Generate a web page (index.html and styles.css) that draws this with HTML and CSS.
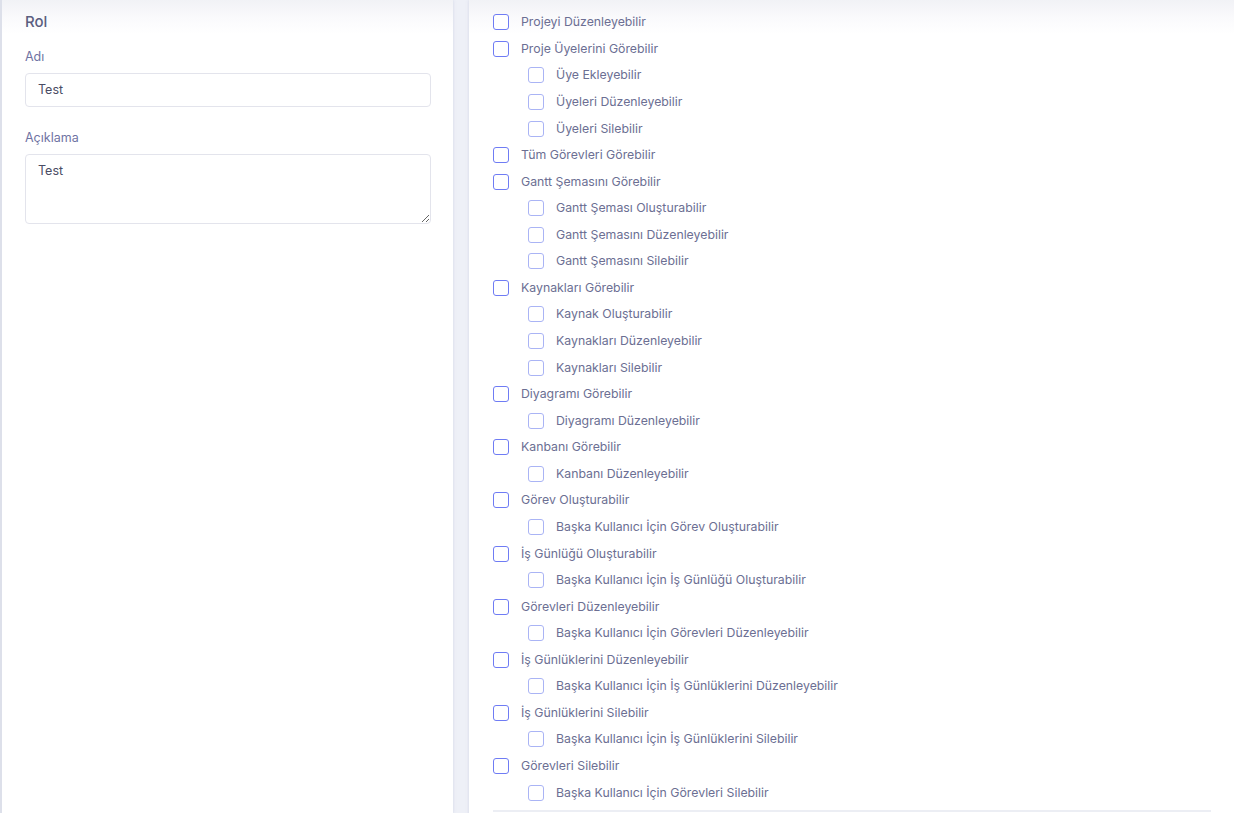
FILE: index.html
```html
<!DOCTYPE html>
<html lang="tr">
<head>
<meta charset="utf-8">
<title>Rol</title>
<link rel="stylesheet" href="styles.css">
</head>
<body>
<div class="page">
  <section class="card card-role">
    <h2 class="card-title">Rol</h2>
    <div class="field">
      <label class="field-label" for="role-name">Adı</label>
      <input class="input" id="role-name" type="text" value="Test">
    </div>
    <div class="field">
      <label class="field-label" for="role-desc">Açıklama</label>
      <textarea class="input textarea" id="role-desc">Test</textarea>
    </div>
  </section>

  <section class="card card-perms">
    <ul class="perm-list">
      <li class="perm"><span class="box"></span><span class="perm-text">Projeyi Düzenleyebilir</span></li>
      <li class="perm"><span class="box"></span><span class="perm-text">Proje Üyelerini Görebilir</span></li>
      <li class="perm sub"><span class="box"></span><span class="perm-text">Üye Ekleyebilir</span></li>
      <li class="perm sub"><span class="box"></span><span class="perm-text">Üyeleri Düzenleyebilir</span></li>
      <li class="perm sub"><span class="box"></span><span class="perm-text">Üyeleri Silebilir</span></li>
      <li class="perm"><span class="box"></span><span class="perm-text">Tüm Görevleri Görebilir</span></li>
      <li class="perm"><span class="box"></span><span class="perm-text">Gantt Şemasını Görebilir</span></li>
      <li class="perm sub"><span class="box"></span><span class="perm-text">Gantt Şeması Oluşturabilir</span></li>
      <li class="perm sub"><span class="box"></span><span class="perm-text">Gantt Şemasını Düzenleyebilir</span></li>
      <li class="perm sub"><span class="box"></span><span class="perm-text">Gantt Şemasını Silebilir</span></li>
      <li class="perm"><span class="box"></span><span class="perm-text">Kaynakları Görebilir</span></li>
      <li class="perm sub"><span class="box"></span><span class="perm-text">Kaynak Oluşturabilir</span></li>
      <li class="perm sub"><span class="box"></span><span class="perm-text">Kaynakları Düzenleyebilir</span></li>
      <li class="perm sub"><span class="box"></span><span class="perm-text">Kaynakları Silebilir</span></li>
      <li class="perm"><span class="box"></span><span class="perm-text">Diyagramı Görebilir</span></li>
      <li class="perm sub"><span class="box"></span><span class="perm-text">Diyagramı Düzenleyebilir</span></li>
      <li class="perm"><span class="box"></span><span class="perm-text">Kanbanı Görebilir</span></li>
      <li class="perm sub"><span class="box"></span><span class="perm-text">Kanbanı Düzenleyebilir</span></li>
      <li class="perm"><span class="box"></span><span class="perm-text">Görev Oluşturabilir</span></li>
      <li class="perm sub"><span class="box"></span><span class="perm-text">Başka Kullanıcı İçin Görev Oluşturabilir</span></li>
      <li class="perm"><span class="box"></span><span class="perm-text">İş Günlüğü Oluşturabilir</span></li>
      <li class="perm sub"><span class="box"></span><span class="perm-text">Başka Kullanıcı İçin İş Günlüğü Oluşturabilir</span></li>
      <li class="perm"><span class="box"></span><span class="perm-text">Görevleri Düzenleyebilir</span></li>
      <li class="perm sub"><span class="box"></span><span class="perm-text">Başka Kullanıcı İçin Görevleri Düzenleyebilir</span></li>
      <li class="perm"><span class="box"></span><span class="perm-text">İş Günlüklerini Düzenleyebilir</span></li>
      <li class="perm sub"><span class="box"></span><span class="perm-text">Başka Kullanıcı İçin İş Günlüklerini Düzenleyebilir</span></li>
      <li class="perm"><span class="box"></span><span class="perm-text">İş Günlüklerini Silebilir</span></li>
      <li class="perm sub"><span class="box"></span><span class="perm-text">Başka Kullanıcı İçin İş Günlüklerini Silebilir</span></li>
      <li class="perm"><span class="box"></span><span class="perm-text">Görevleri Silebilir</span></li>
      <li class="perm sub"><span class="box"></span><span class="perm-text">Başka Kullanıcı İçin Görevleri Silebilir</span></li>
    </ul>
    <div class="divider"></div>
  </section>
</div>
</body>
</html>
```

FILE: styles.css
```css
* {
  box-sizing: border-box;
}

html, body {
  margin: 0;
  padding: 0;
}

body {
  background: #eef0f7;
  font-family: Inter, "Noto Sans", sans-serif;
  color: #6c6f93;
  height: 813px;
  overflow: hidden;
}

.page {
  display: flex;
  gap: 16px;
  align-items: flex-start;
  height: 100%;
}

.card {
  background: linear-gradient(to bottom, #f1f2f6 0, #fafafc 18px, #ffffff 34px);
  box-shadow: 0 0 3px rgba(160, 166, 200, 0.35);
}

.card-role {
  width: 453px;
  height: 100%;
  border-left: 2px solid #dde0ea;
  padding: 12px 22px 0 23px;
}

.card-title {
  margin: 0 0 16px;
  font-size: 15px;
  line-height: 20px;
  font-weight: 500;
  color: #5b5e80;
}

.field {
  margin-bottom: 22px;
}

.field-label {
  display: block;
  font-size: 12.5px;
  line-height: 18px;
  color: #6f73a3;
  margin-bottom: 7px;
}

.input {
  display: block;
  width: 100%;
  height: 34px;
  padding: 5px 12px 7px;
  border: 1px solid #e3e4ec;
  border-radius: 4px;
  font-family: inherit;
  font-size: 12.5px;
  line-height: 18px;
  color: #4a4c63;
  background: #fff;
  outline: none;
}

.textarea {
  height: 70px;
  padding-top: 7px;
  resize: vertical;
}

.card-perms {
  flex: 1;
  min-height: 830px;
  padding: 13px 23px 0 24px;
}

.perm-list {
  list-style: none;
  margin: 0;
  padding: 0;
  display: flex;
  flex-direction: column;
  gap: 8px;
}

.perm {
  display: flex;
  align-items: center;
  gap: 12px;
  height: 18.57px;
}

.perm.sub {
  padding-left: 35px;
}

.box {
  flex: none;
  width: 16px;
  height: 16px;
  border: 1.5px solid #6f7cf4;
  border-radius: 3px;
  background: #fff;
}

.perm.sub .box {
  border-color: #aab4f5;
}

.perm-text {
  font-size: 12.3px;
  line-height: 18px;
  color: #6c6f93;
  white-space: nowrap;
}

.divider {
  margin-top: 8px;
  height: 2px;
  background: #eceef4;
}
```
